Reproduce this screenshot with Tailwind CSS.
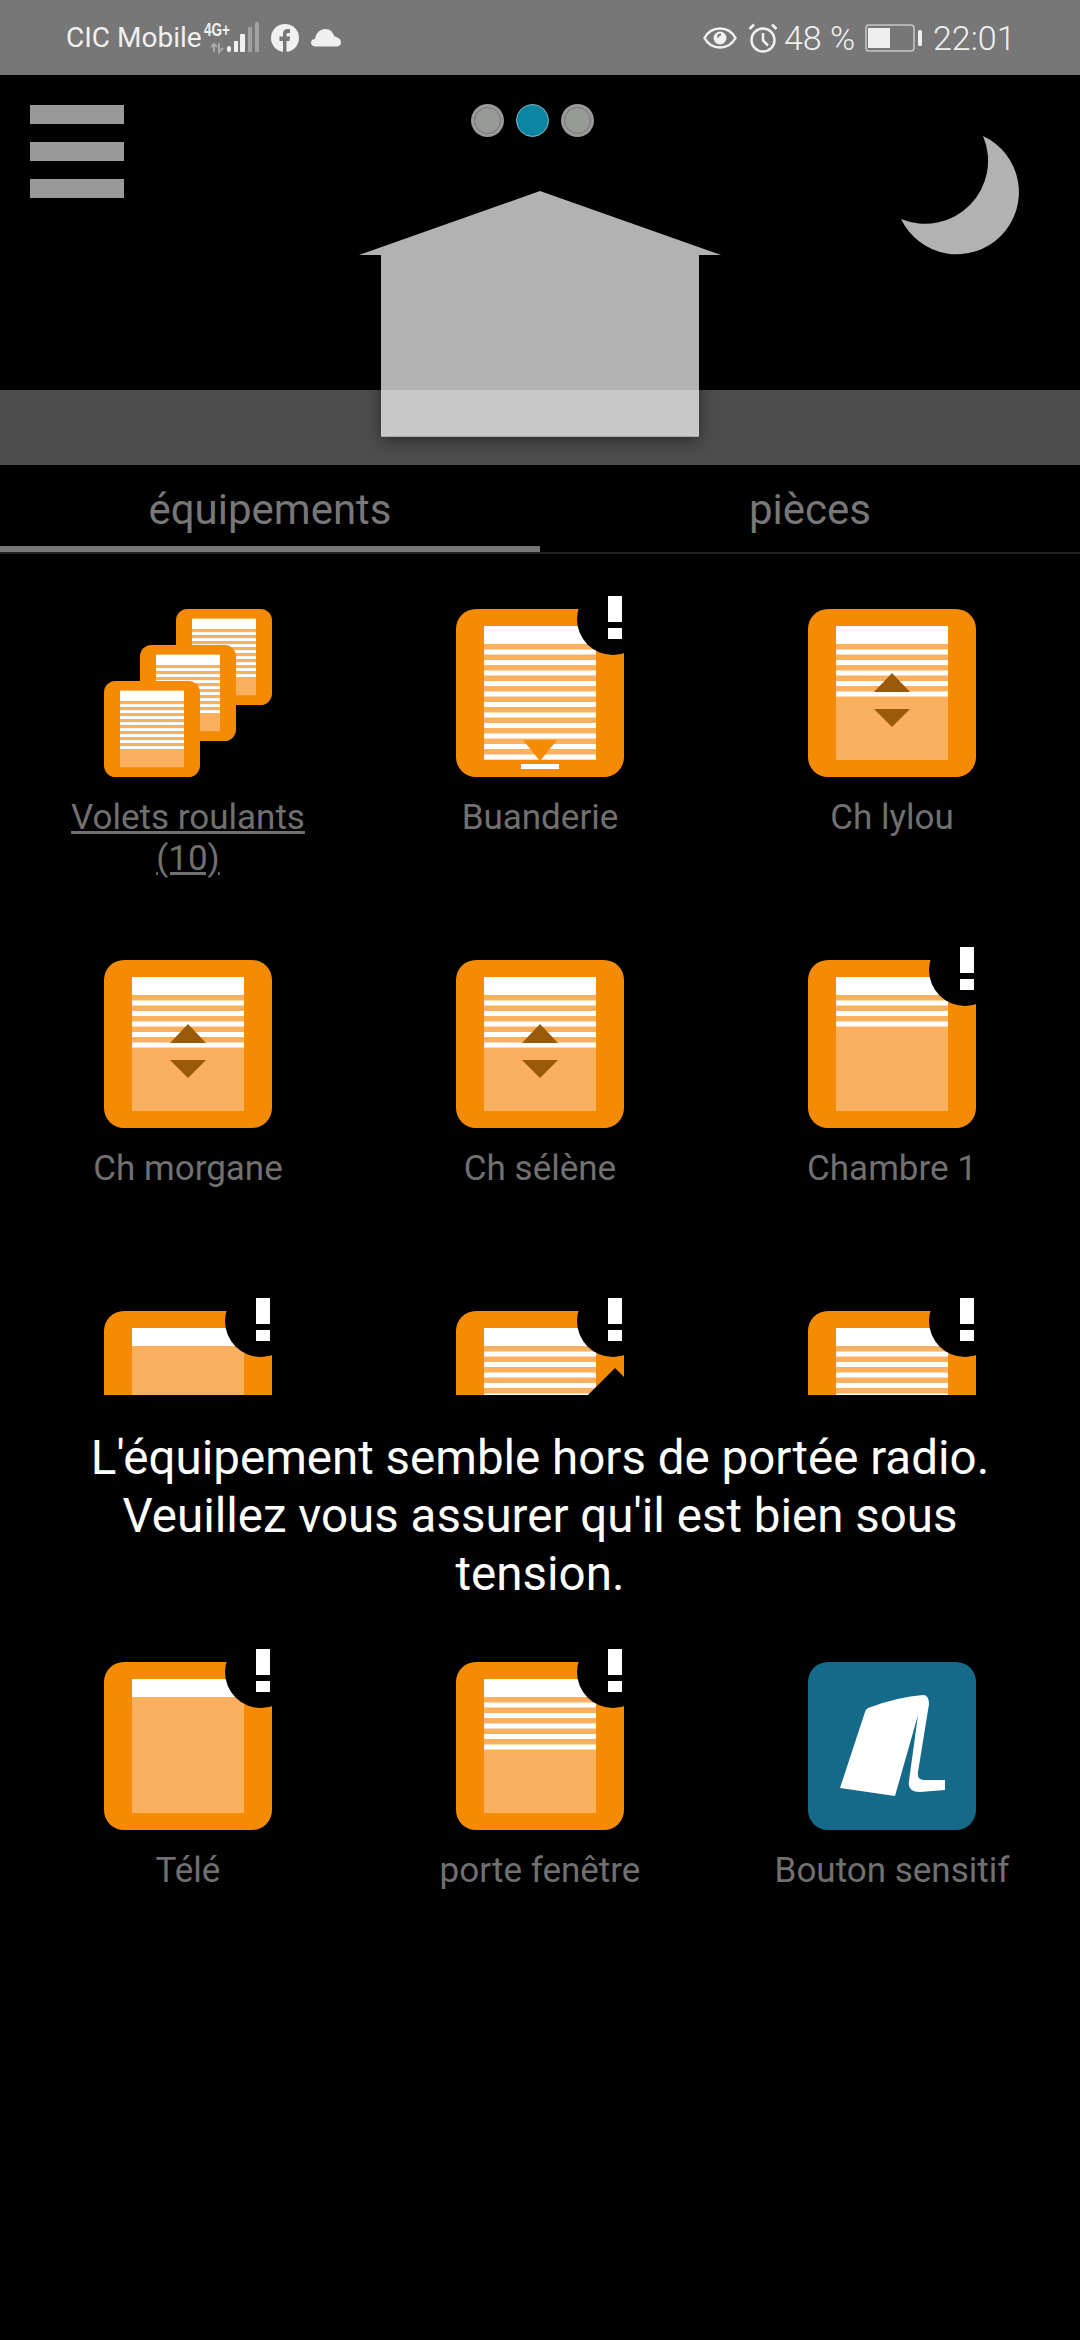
<!DOCTYPE html>
<html lang="fr">
<head>
    <meta charset="UTF-8">
    <meta name="viewport" content="width=device-width, initial-scale=1.0">
    <title>Équipements</title>
    <script src="https://cdn.jsdelivr.net/npm/@tailwindcss/browser@4"></script>
</head>
<body class="bg-black">
    <!-- Shared icon parts -->
    <svg class="absolute w-0 h-0">
        <defs>
            <g id="base">
                <rect width="168" height="168" rx="20" fill="#f58a03"/>
                <rect x="28" y="17" width="112" height="134" fill="#fbb05f"/>
                <rect x="28" y="17" width="112" height="18" fill="#fff"/>
            </g>
            <g id="slats3" fill="#fff">
                <rect x="28" y="40.5" width="112" height="5"/>
                <rect x="28" y="51" width="112" height="5"/>
                <rect x="28" y="61.5" width="112" height="5"/>
            </g>
            <g id="slats5">
                <use href="#slats3"/>
                <rect x="28" y="72" width="112" height="5" fill="#fff"/>
                <rect x="28" y="82.5" width="112" height="5" fill="#fff"/>
            </g>
            <g id="slats8">
                <use href="#slats5"/>
                <rect x="28" y="93" width="112" height="5" fill="#fff"/>
                <rect x="28" y="103.5" width="112" height="5" fill="#fff"/>
                <rect x="28" y="114" width="112" height="5" fill="#fff"/>
            </g>
            <g id="slats11">
                <use href="#slats8"/>
                <g fill="#fff">
                    <rect x="28" y="124.5" width="112" height="5"/>
                    <rect x="28" y="135" width="112" height="5"/>
                    <rect x="28" y="145.5" width="112" height="5"/>
                </g>
            </g>
            <g id="arrows" fill="#9a5a0a">
                <polygon points="84,64 66,83 102,83"/>
                <polygon points="66,100 102,100 84,118"/>
            </g>
            <g id="updown">
                <use href="#base"/>
                <use href="#slats5"/>
                <use href="#arrows"/>
            </g>
        </defs>
    </svg>

    <div class="relative w-[1080px] h-[2340px] overflow-hidden bg-black font-['Roboto',sans-serif]">
        <!-- Status bar -->
        <div class="flex items-center justify-between h-[75px] bg-[#777777] pl-[66px] pr-[67px] text-[#f0f0f0]">
            <div class="flex items-center">
                <span class="text-[28px] leading-none w-[134px] whitespace-nowrap">CIC Mobile</span>
                <svg class="w-[58px] h-[40px] ml-[2px]" viewBox="200 18 58 40">
                    <text x="202" y="36" font-family="Liberation Sans Narrow, Liberation Sans, sans-serif" font-size="19" font-weight="700" textLength="26" lengthAdjust="spacingAndGlyphs" fill="#f0f0f0">4G+</text>
                    <path d="M212 52v-8m-3 3l3-3 3 3M217 43v9l4-4" fill="none" stroke="#a8a8a8" stroke-width="2"/>
                    <rect x="225" y="46" width="4" height="6" rx="2" fill="#f0f0f0"/>
                    <rect x="232" y="41" width="4" height="11" rx="1" fill="#f0f0f0"/>
                    <rect x="238" y="34" width="5" height="18" rx="1" fill="#f0f0f0"/>
                    <rect x="246" y="27" width="4" height="25" rx="1" fill="#a0a0a0"/>
                    <rect x="253" y="22" width="4" height="30" rx="1" fill="#a0a0a0"/>
                </svg>
                <svg class="w-[28px] h-[28px] ml-[11px]" viewBox="0 0 28 28">
                    <circle cx="14" cy="14" r="14" fill="#f0f0f0"/>
                    <path d="M12 28V17H8.500v-4.500H12V9.500C12 6.500 14 5 16.500 5c1.200 0 2.500.2 2.500.2V9h-1.700c-1.500 0-1.800.8-1.800 1.700v1.800h3.600l-.6 4.500h-3V28z" fill="#777777"/>
                </svg>
                <svg class="w-[30px] h-[18px] ml-[12px]" viewBox="0 0 30 18">
                    <path d="M5 17.500C2 17.500 0 16 0 13.500 0 11 2 10 4 10 5 4 9 0 14.500 0 19 0 22 3 23.500 7.500 27 8 30 10 30 13.500 30 16 28 17.500 25.500 17.500z" fill="#f0f0f0"/>
                </svg>
            </div>
            <div class="flex items-center">
                <svg class="w-[34px] h-[22px]" viewBox="0 0 34 22">
                    <path d="M1.500 11C5 4.500 10.500 1.500 17 1.500S29 4.500 32.500 11C29 17.500 23.500 20.500 17 20.500S5 17.500 1.500 11z" fill="none" stroke="#f0f0f0" stroke-width="2.500"/>
                    <circle cx="17" cy="11" r="6.500" fill="#f0f0f0"/>
                    <path d="M15 10.500a3 3 0 0 1 3-3" fill="none" stroke="#777777" stroke-width="1.800"/>
                </svg>
                <svg class="w-[30px] h-[30px] ml-[11px]" viewBox="0 0 30 30">
                    <circle cx="15" cy="17" r="11.500" fill="none" stroke="#f0f0f0" stroke-width="2.500"/>
                    <path d="M15 10v7.500l5 5" fill="none" stroke="#f0f0f0" stroke-width="2.500"/>
                    <path d="M6 1.500L1.500 6M24 1.500L28.500 6" fill="none" stroke="#f0f0f0" stroke-width="2.500"/>
                </svg>
                <span class="text-[34px] leading-none font-light ml-[6px] w-[76px] whitespace-nowrap">48 %</span>
                <svg class="w-[58px] h-[28px] ml-[5px]" viewBox="0 0 58 28">
                    <rect x="1" y="1" width="48" height="26" rx="3" fill="none" stroke="#c8c8c8" stroke-width="1.500"/>
                    <rect x="3" y="4" width="22" height="20" fill="#f0f0f0"/>
                    <rect x="53" y="6" width="4" height="16" rx="1.500" fill="#f0f0f0"/>
                </svg>
                <span class="text-[34px] leading-none font-light ml-[10px] w-[80px] whitespace-nowrap">22:01</span>
            </div>
        </div>

        <!-- Header: menu, pager dots, night mode, house -->
        <div class="relative h-[315px] pt-[30px]">
            <div class="flex items-start pl-[30px]">
                <div class="flex flex-col gap-[18px] w-[94px]">
                    <div class="h-[19px] bg-[#999999]"></div>
                    <div class="h-[19px] bg-[#999999]"></div>
                    <div class="h-[19px] bg-[#999999]"></div>
                </div>
                <div class="flex gap-[12px] ml-[347px] -mt-[1px]">
                    <div class="flex items-center justify-center w-[33px] h-[33px] rounded-full bg-[#979a96]"><div class="w-[27px] h-[27px] rounded-full border border-[#777777]"></div></div>
                    <div class="w-[33px] h-[33px] rounded-full bg-[#0a86a3] border border-[#8fb4bc]"></div>
                    <div class="flex items-center justify-center w-[33px] h-[33px] rounded-full bg-[#979a96]"><div class="w-[27px] h-[27px] rounded-full border border-[#777777]"></div></div>
                </div>
            </div>
            <svg class="absolute left-[895px] top-[55px] w-[130px] h-[130px]" viewBox="895 130 130 130">
                <path d="M983 136A62 62 0 1 1 901 219A63 63 0 0 0 983 136z" fill="#b2b2b2"/>
            </svg>
        </div>
        <div class="h-[75px] bg-[#4d4d4d]"></div>
        <svg class="absolute left-[359px] top-[191px] w-[362px] h-[246px] drop-shadow-[0_4px_8px_rgba(0,0,0,0.45)]" viewBox="359 191 362 246">
            <polygon points="540,191 721,255 699,255 699,390 381,390 381,255 359,255" fill="#b2b2b2"/>
            <rect x="381" y="390" width="318" height="47" fill="#c8c8c8"/>
            <rect x="381" y="436" width="318" height="1" fill="#a8a8a8"/>
        </svg>

        <!-- Tabs -->
        <div class="flex h-[87px] text-[42px] leading-none text-[#777777]">
            <div class="flex-1 flex items-center justify-center pt-[8px] border-b-[6px] border-[#777777]">équipements</div>
            <div class="flex-1 flex items-center justify-center pt-[8px] border-b-[6px] border-black">pièces</div>
        </div>
        <div class="h-[2px] bg-[#222222]"></div>

        <!-- Devices -->
        <div class="grid grid-cols-3 auto-rows-[351px] px-[12px] pt-[55px] text-[35px] leading-[41px] text-[#707070] text-center">
            <div class="flex flex-col items-center">
                <svg class="w-[168px] h-[168px]" viewBox="0 0 168 168">
                    <use href="#base" transform="translate(72 0) scale(.5714)"/>
                    <use href="#slats8" transform="translate(72 0) scale(.5714)"/>
                    <use href="#base" transform="translate(36 36) scale(.5714)"/>
                    <use href="#slats8" transform="translate(36 36) scale(.5714)"/>
                    <use href="#base" transform="translate(0 72) scale(.5714)"/>
                    <use href="#slats8" transform="translate(0 72) scale(.5714)"/>
                </svg>
                <div class="mt-[20px] underline">Volets roulants<br>(10)</div>
            </div>

            <div class="flex flex-col items-center">
                <div class="relative w-[168px] h-[168px]">
                    <svg class="w-[168px] h-[168px]" viewBox="0 0 168 168">
                        <use href="#base"/>
                        <use href="#slats11"/>
                        <polygon points="67,131 101,131 84,152" fill="#f58a03"/>
                        <rect x="65" y="155" width="38" height="5" fill="#fff"/>
                    </svg>
                    <div class="absolute left-[121px] -top-[26px] w-[72px] h-[72px] rounded-full bg-black"></div>
                    <div class="absolute left-[152px] -top-[13px] w-[14px] h-[26px] bg-white"></div>
                    <div class="absolute left-[152px] top-[19px] w-[14px] h-[11px] bg-white"></div>
                </div>
                <div class="mt-[20px]">Buanderie</div>
            </div>

            <div class="flex flex-col items-center">
                <svg class="w-[168px] h-[168px]" viewBox="0 0 168 168"><use href="#updown"/></svg>
                <div class="mt-[20px]">Ch lylou</div>
            </div>

            <div class="flex flex-col items-center">
                <svg class="w-[168px] h-[168px]" viewBox="0 0 168 168"><use href="#updown"/></svg>
                <div class="mt-[20px]">Ch morgane</div>
            </div>

            <div class="flex flex-col items-center">
                <svg class="w-[168px] h-[168px]" viewBox="0 0 168 168"><use href="#updown"/></svg>
                <div class="mt-[20px]">Ch sélène</div>
            </div>

            <div class="flex flex-col items-center">
                <div class="relative w-[168px] h-[168px]">
                    <svg class="w-[168px] h-[168px]" viewBox="0 0 168 168">
                        <use href="#base"/>
                        <use href="#slats3"/>
                    </svg>
                    <div class="absolute left-[121px] -top-[26px] w-[72px] h-[72px] rounded-full bg-black"></div>
                    <div class="absolute left-[152px] -top-[13px] w-[14px] h-[26px] bg-white"></div>
                    <div class="absolute left-[152px] top-[19px] w-[14px] h-[11px] bg-white"></div>
                </div>
                <div class="mt-[20px]">Chambre 1</div>
            </div>

            <div class="flex flex-col items-center">
                <div class="relative w-[168px] h-[168px]">
                    <svg class="w-[168px] h-[168px]" viewBox="0 0 168 168"><use href="#base"/></svg>
                    <div class="absolute left-[121px] -top-[26px] w-[72px] h-[72px] rounded-full bg-black"></div>
                    <div class="absolute left-[152px] -top-[13px] w-[14px] h-[26px] bg-white"></div>
                    <div class="absolute left-[152px] top-[19px] w-[14px] h-[11px] bg-white"></div>
                </div>
            </div>

            <div class="flex flex-col items-center">
                <div class="relative w-[168px] h-[168px]">
                    <svg class="w-[168px] h-[168px]" viewBox="0 0 168 168">
                        <use href="#base"/>
                        <use href="#slats11"/>
                        <polygon points="159,57 132,84 186,84" fill="#000"/>
                    </svg>
                    <div class="absolute left-[121px] -top-[26px] w-[72px] h-[72px] rounded-full bg-black"></div>
                    <div class="absolute left-[152px] -top-[13px] w-[14px] h-[26px] bg-white"></div>
                    <div class="absolute left-[152px] top-[19px] w-[14px] h-[11px] bg-white"></div>
                </div>
            </div>

            <div class="flex flex-col items-center">
                <div class="relative w-[168px] h-[168px]">
                    <svg class="w-[168px] h-[168px]" viewBox="0 0 168 168">
                        <use href="#base"/>
                        <use href="#slats11"/>
                    </svg>
                    <div class="absolute left-[121px] -top-[26px] w-[72px] h-[72px] rounded-full bg-black"></div>
                    <div class="absolute left-[152px] -top-[13px] w-[14px] h-[26px] bg-white"></div>
                    <div class="absolute left-[152px] top-[19px] w-[14px] h-[11px] bg-white"></div>
                </div>
            </div>

            <div class="flex flex-col items-center">
                <div class="relative w-[168px] h-[168px]">
                    <svg class="w-[168px] h-[168px]" viewBox="0 0 168 168"><use href="#base"/></svg>
                    <div class="absolute left-[121px] -top-[26px] w-[72px] h-[72px] rounded-full bg-black"></div>
                    <div class="absolute left-[152px] -top-[13px] w-[14px] h-[26px] bg-white"></div>
                    <div class="absolute left-[152px] top-[19px] w-[14px] h-[11px] bg-white"></div>
                </div>
                <div class="mt-[20px]">Télé</div>
            </div>

            <div class="flex flex-col items-center">
                <div class="relative w-[168px] h-[168px]">
                    <svg class="w-[168px] h-[168px]" viewBox="0 0 168 168">
                        <use href="#base"/>
                        <use href="#slats5"/>
                    </svg>
                    <div class="absolute left-[121px] -top-[26px] w-[72px] h-[72px] rounded-full bg-black"></div>
                    <div class="absolute left-[152px] -top-[13px] w-[14px] h-[26px] bg-white"></div>
                    <div class="absolute left-[152px] top-[19px] w-[14px] h-[11px] bg-white"></div>
                </div>
                <div class="mt-[20px]">porte fenêtre</div>
            </div>

            <div class="flex flex-col items-center">
                <svg class="w-[168px] h-[168px]" viewBox="0 0 168 168">
                    <rect width="168" height="168" rx="20" fill="#156a8a"/>
                    <path d="M32 126L57 50Q58 46 63 45Q90 35 115 33Q121 33 121 42L110 110Q109 118 116 118L137 118L137 128L112 130Q99 130 101 119L110 53L87 134z" fill="#fff"/>
                </svg>
                <div class="mt-[20px] whitespace-nowrap">Bouton sensitif</div>
            </div>
        </div>

        <!-- Toast -->
        <div class="absolute left-0 right-0 top-[1395px] bg-black px-[70px] py-[34px] text-center text-[47.5px] leading-[58px] text-white">
            L'équipement semble hors de portée radio. Veuillez vous assurer qu'il est bien sous tension.
        </div>
    </div>
</body>
</html>
